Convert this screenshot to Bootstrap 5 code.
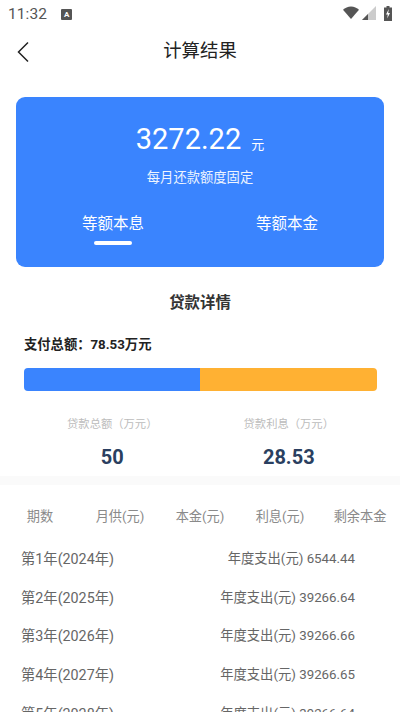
<!DOCTYPE html>
<html lang="zh">
<head>
<meta charset="utf-8">
<title>计算结果</title>
<link rel="stylesheet" href="https://cdn.jsdelivr.net/npm/bootstrap@5.3.0/dist/css/bootstrap.min.css">
<style>
html,body{height:712px;overflow:hidden;background:#fff}
body{font-family:Roboto,"Noto Sans CJK SC",sans-serif;color:#333}
.stat-bar{height:28px;padding:0 8px 0 8px;color:#555}
.stat-time{font-size:15.5px;letter-spacing:.1px;line-height:28px}
.stat-a{width:11px;height:11px;background:#555;color:#fff;font-size:8px;line-height:11px;text-align:center;margin-left:14px;font-weight:700;border-radius:1px}
.stat-icons{padding-bottom:2px;gap:3px}
.stat-batt{margin-left:5px}
.head-bar{height:46px;position:relative}
.head-back{position:absolute;left:16px;top:13px}
.head-title{font-size:18.4px;color:#222;line-height:46px}
.hero-card{margin:23px 16px 0;height:170px;background:#3a84fe;border-radius:9px;color:#fff;padding-top:22px}
.hero-num{font-size:29px;line-height:40px}
.hero-unit{font-size:13px;margin-left:10px}
.hero-sub{font-size:13.3px;line-height:20px;margin-top:3px;color:#eef4ff}
.hero-tabs{margin-top:24px;padding:0 10px}
.hero-tab{flex:1 1 50%;font-size:15.5px;line-height:24px;text-align:center}
.hero-line{width:38px;height:4px;background:#fff;border-radius:2px;margin:5px auto 0}
.sect-title{font-size:15.4px;font-weight:700;line-height:22px;margin-top:25px;color:#333}
.total-line{font-size:13.3px;font-weight:700;line-height:18px;margin:22px 24px 0;color:#222}
.split-bar{height:23px;margin:14px 23px 0 24px;border-radius:4px;overflow:hidden}
.split-a{background:#3a84fe}
.split-b{background:#ffb133}
.metric-row{margin:25px 20px 0 27px}
.metric-lbl{font-size:11.3px;line-height:18px;color:#bcbcbc}
.metric-val{font-size:20px;font-weight:700;line-height:28px;color:#2a3f60;margin-top:9px}
.metric-l{width:171px}
.metric-r{width:183px}
.band{height:9px;background:#fafafa;margin-top:5px}
.tbl-head{font-size:13.2px;color:#8a8a8a;line-height:20px;margin-top:22px}
.tbl-cell{flex:1 1 20%;text-align:center}
.tbl-rows{margin-top:22px;padding:0 45px 0 21px}
.tbl-row{height:38.7px;line-height:20px;color:#666}
.tbl-year{font-size:14.3px}
.tbl-amt{font-size:13.3px}
</style>
</head>
<body>
<div class="stat-bar d-flex align-items-center">
  <span class="stat-time">11:32</span>
  <span class="stat-a">A</span>
  <span class="stat-icons ms-auto d-flex align-items-center">
    <svg width="16" height="14" viewBox="0 0 17 14"><path d="M0 3.500C2.200 1.400 5.200 0 8.500 0s6.300 1.400 8.500 3.500L8.500 13.500z" fill="#555"/></svg>
    <svg width="14" height="14" viewBox="0 0 14 14"><path d="M0 14 14 0v14z" fill="#ccc"/><path d="M0 14 6 8v6z" fill="#555"/></svg>
    <svg class="stat-batt" width="8" height="15" viewBox="0 0 8 15"><path d="M2.500 0h3v1.500H8V15H0V1.500h2.500z" fill="#555"/><path d="M4.800 3 2 8.500h1.800L3.200 12.500 6 7H4.200z" fill="#fff"/></svg>
  </span>
</div>
<div class="head-bar text-center">
  <svg class="head-back" width="14" height="22" viewBox="0 0 14 22"><path d="M12 1.500 2.500 11l9.500 9.500" fill="none" stroke="#222" stroke-width="1.500"/></svg>
  <span class="head-title">计算结果</span>
</div>
<div class="hero-card text-center">
  <div class="hero-num">3272.22<span class="hero-unit">元</span></div>
  <div class="hero-sub">每月还款额度固定</div>
  <div class="hero-tabs d-flex">
    <div class="hero-tab">等额本息<div class="hero-line"></div></div>
    <div class="hero-tab">等额本金</div>
  </div>
</div>
<div class="sect-title text-center">贷款详情</div>
<div class="total-line">支付总额：78.53万元</div>
<div class="split-bar d-flex">
  <div class="split-a" style="width:49.9%"></div>
  <div class="split-b" style="width:50.1%"></div>
</div>
<div class="metric-row d-flex text-center">
  <div class="metric-l"><div class="metric-lbl">贷款总额（万元）</div><div class="metric-val">50</div></div>
  <div class="metric-r"><div class="metric-lbl">贷款利息（万元）</div><div class="metric-val">28.53</div></div>
</div>
<div class="band"></div>
<div class="tbl-head d-flex">
  <span class="tbl-cell">期数</span><span class="tbl-cell">月供(元)</span><span class="tbl-cell">本金(元)</span><span class="tbl-cell">利息(元)</span><span class="tbl-cell">剩余本金</span>
</div>
<div class="tbl-rows">
  <div class="tbl-row d-flex justify-content-between"><span class="tbl-year">第1年(2024年)</span><span class="tbl-amt">年度支出(元) 6544.44</span></div>
  <div class="tbl-row d-flex justify-content-between"><span class="tbl-year">第2年(2025年)</span><span class="tbl-amt">年度支出(元) 39266.64</span></div>
  <div class="tbl-row d-flex justify-content-between"><span class="tbl-year">第3年(2026年)</span><span class="tbl-amt">年度支出(元) 39266.66</span></div>
  <div class="tbl-row d-flex justify-content-between"><span class="tbl-year">第4年(2027年)</span><span class="tbl-amt">年度支出(元) 39266.65</span></div>
  <div class="tbl-row d-flex justify-content-between"><span class="tbl-year">第5年(2028年)</span><span class="tbl-amt">年度支出(元) 39266.64</span></div>
</div>
<script src="https://cdn.jsdelivr.net/npm/bootstrap@5.3.0/dist/js/bootstrap.bundle.min.js"></script>
</body>
</html>
